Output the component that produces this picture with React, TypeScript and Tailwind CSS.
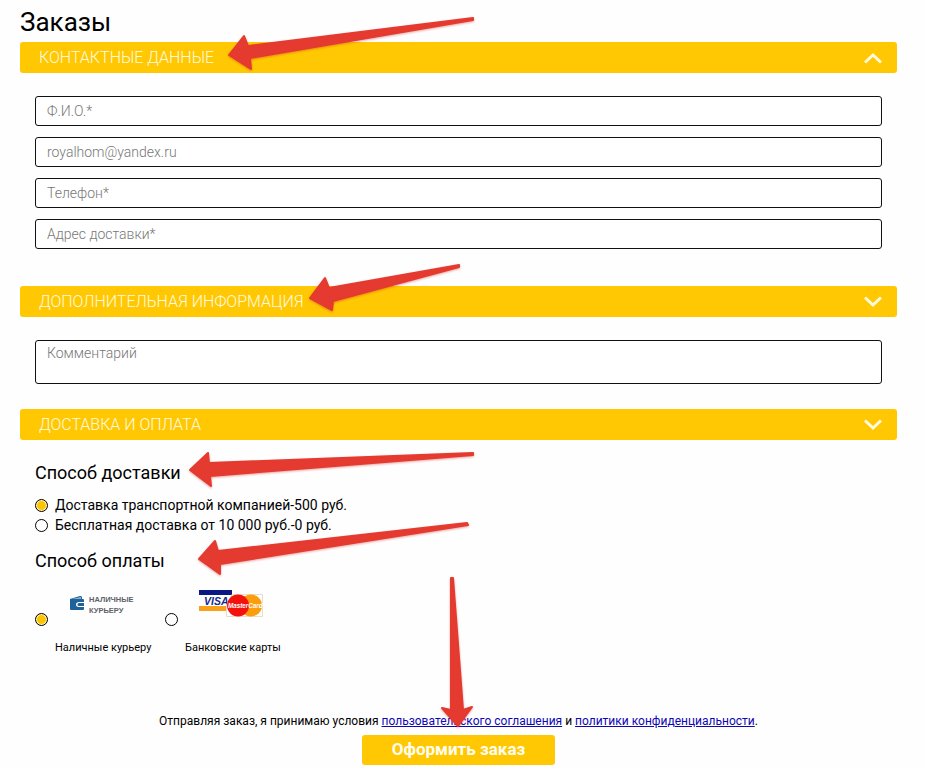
import React, { useState } from 'react';

type Field = {
  id: string;
  type: string;
  placeholder: string;
};

const fields: Field[] = [
  { id: 'name', type: 'text', placeholder: 'Ф.И.О.*' },
  { id: 'email', type: 'email', placeholder: 'royalhom@yandex.ru' },
  { id: 'phone', type: 'tel', placeholder: 'Телефон*' },
  { id: 'address', type: 'text', placeholder: 'Адрес доставки*' },
];

const deliveryOptions = [
  { id: 'transport', label: 'Доставка транспортной компанией-500 руб.' },
  { id: 'free', label: 'Бесплатная доставка от 10 000 руб.-0 руб.' },
];

const radioClass =
  'appearance-none shrink-0 w-[13px] h-[13px] rounded-full border border-black bg-white checked:bg-[#fdc500] checked:shadow-[inset_0_0_0_1px_#fff6cf]';

function Chevron({ up = false }: { up?: boolean }) {
  return (
    <svg className="w-5 h-3" viewBox="0 0 20 12" fill="none" stroke="#fffbe0" strokeWidth="3" aria-hidden="true">
      <path d={up ? 'M2 10.5 L10 3 L18 10.5' : 'M2 1.5 L10 9 L18 1.5'} />
    </svg>
  );
}

// Red pointer laid over the page, drawn from its outline
function Arrow({ points, className }: { points: string; className: string }) {
  return (
    <svg
      className={`absolute z-10 w-px h-px overflow-visible pointer-events-none drop-shadow-[0_1px_1px_rgba(200,40,30,0.4)] ${className}`}
      fill="#e53a30"
      stroke="#e53a30"
      strokeWidth="2"
      strokeLinejoin="round"
      aria-hidden="true"
    >
      <polygon points={points} />
    </svg>
  );
}

function SectionBar({ title, open, onToggle, children }: {
  title: string;
  open: boolean;
  onToggle: () => void;
  children?: React.ReactNode;
}) {
  return (
    <h2 className="relative">
      <button
        type="button"
        onClick={onToggle}
        aria-expanded={open}
        className="flex items-center justify-between w-full h-[31px] pl-[19px] pr-[14px] rounded-[3px] bg-[#ffc803] text-[#fffbe0] text-[16px] font-light"
      >
        <span>{title}</span>
        <Chevron up={open} />
      </button>
      {children}
    </h2>
  );
}

function CashLogo() {
  return (
    <svg className="w-[66px] h-[22px]" viewBox="0 0 66 22" aria-hidden="true">
      <path d="M1 5 L11 2 Q13 1.500 13 3.500 V5 H14 Q15 5 15 6 V8 H10 Q7 8 7 10.500 Q7 13 10 13 H15 V15 Q15 16 14 16 H2 Q1 16 1 15 Z" fill="#1f6299" />
      <path d="M10 9 H15 V12 H10 Q8.500 12 8.500 10.500 Q8.500 9 10 9 Z" fill="#1f6299" />
      <path d="M3 5 L12 3 V5 Z" fill="#8fb3d0" />
      <g fill="#5d6167" fontFamily="Liberation Sans, Arial, sans-serif" fontSize="7.500" fontWeight="700">
        <text x="20" y="8">НАЛИЧНЫЕ</text>
        <text x="20" y="18.500">КУРЬЕРУ</text>
      </g>
    </svg>
  );
}

function CardsLogo() {
  return (
    <svg className="w-[66px] h-[28px]" viewBox="0 0 66 28" aria-hidden="true">
      <rect x="0" y="0" width="33" height="21" fill="#fff" />
      <rect x="0" y="0" width="33" height="5" fill="#0b1884" />
      <rect x="0" y="16" width="33" height="5" fill="#f9a11b" />
      <text x="5" y="14.500" fill="#142a8c" fontFamily="Liberation Sans, Arial, sans-serif" fontSize="10.500" fontWeight="700" fontStyle="italic">VISA</text>
      <path d="M27.500 26.500 V15 L33 4.500 H63.500 V26.500 Z" fill="#fff" stroke="#e6ddcb" />
      <circle cx="52" cy="15.500" r="11" fill="#fb9d0c" />
      <circle cx="39" cy="15.500" r="11" fill="#f3120e" />
      <text x="29" y="18" fill="#fff" fontFamily="Liberation Sans, Arial, sans-serif" fontSize="6.300" fontWeight="700" fontStyle="italic">MasterCard</text>
    </svg>
  );
}

const paymentOptions = [
  { id: 'cash', label: 'Наличные курьеру', logo: <CashLogo />, logoClass: 'pt-[11px]' },
  { id: 'card', label: 'Банковские карты', logo: <CardsLogo />, logoClass: 'pt-[7px]' },
];

function App() {
  const [open, setOpen] = useState(true);
  const [infoOpen, setInfoOpen] = useState(false);
  const [deliveryOpen, setDeliveryOpen] = useState(false);
  const [delivery, setDelivery] = useState('transport');
  const [payment, setPayment] = useState('cash');

  return (
    <main className="relative pl-5 pr-[30px] pb-[3px] bg-[#fefefe] text-black font-[Roboto,sans-serif]">
      <h1 className="h-[42px] pt-[6px] text-[26px] leading-8">Заказы</h1>

      <form onSubmit={e => e.preventDefault()}>
        <SectionBar title="КОНТАКТНЫЕ ДАННЫЕ" open={open} onToggle={() => setOpen(!open)}>
          <Arrow className="left-0 top-0" points="209,13 224,-6 228,4 453,-24 453,-22 230,16 231,27" />
        </SectionBar>
        {open && (
          <div className="flex flex-col gap-[11px] px-[15px] pt-[23px] pb-[37px]">
            {fields.map(field => (
              <input
                key={field.id}
                id={field.id}
                type={field.type}
                aria-label={field.placeholder}
                placeholder={field.placeholder}
                className="w-full h-[30px] px-[11px] rounded-[3px] border border-[#111] bg-white text-[14px] font-light placeholder:text-[#777]"
              />
            ))}
          </div>
        )}

        <SectionBar title="ДОПОЛНИТЕЛЬНАЯ ИНФОРМАЦИЯ" open={infoOpen} onToggle={() => setInfoOpen(!infoOpen)}>
          <Arrow className="left-0 top-0" points="290,12 305,-8 309,2 439,-21 439,-19 313,15 312,24" />
        </SectionBar>
        <div className="flex px-[15px] pt-[23px] pb-[25px]">
          <textarea
            aria-label="Комментарий"
            placeholder="Комментарий"
            className="w-full h-[44px] px-[11px] py-[2px] resize-none rounded-[3px] border border-[#111] bg-white text-[14px] font-light leading-5 placeholder:text-[#777]"
          />
        </div>

        <SectionBar title="ДОСТАВКА И ОПЛАТА" open={deliveryOpen} onToggle={() => setDeliveryOpen(!deliveryOpen)} />
        <div className="px-[15px]">
          <fieldset className="relative pt-[19px]">
            <legend className="float-left w-full mb-2 text-[18px] leading-7">Способ доставки</legend>
            <Arrow className="left-0 top-0" points="155,30 173,13 174,23 438,13 438,15 175,36 176,46" />
            <div className="clear-both">
              {deliveryOptions.map(option => (
                <label key={option.id} className="flex items-center gap-[7px] h-5 text-[14px] leading-5">
                  <input
                    type="radio"
                    name="delivery"
                    className={radioClass}
                    checked={delivery === option.id}
                    onChange={() => setDelivery(option.id)}
                  />
                  {option.label}
                </label>
              ))}
            </div>
          </fieldset>

          <fieldset className="relative pt-3">
            <legend className="float-left w-full mb-2 text-[18px] leading-7">Способ оплаты</legend>
            <Arrow className="left-0 top-0" points="164,24 180,6 183,16 432,-12 433,-10 185,29 185,39" />
            <div className="clear-both flex">
              {paymentOptions.map(option => (
                <label key={option.id} className="flex items-center gap-[7px] w-[130px] text-[11px] leading-4">
                  <input
                    type="radio"
                    name="payment"
                    className={radioClass}
                    checked={payment === option.id}
                    onChange={() => setPayment(option.id)}
                  />
                  <span className="flex flex-col whitespace-nowrap">
                    <span className={`flex h-[57px] pl-[14px] ${option.logoClass}`}>{option.logo}</span>
                    {option.label}
                  </span>
                </label>
              ))}
            </div>
          </fieldset>
        </div>

        <div className="relative flex flex-col items-center pt-[55px]">
          <Arrow className="left-1/2 top-0" points="-1,70 -17,52 -8,54 -8,-78 -6,-78 4,54 13,51" />
          <p className="mb-1 text-[12px] leading-5">
            Отправляя заказ, я принимаю условия{' '}
            <a href="#agreement" className="text-[#0f06b5] underline">пользовательского соглашения</a> и{' '}
            <a href="#privacy" className="text-[#0f06b5] underline">политики конфиденциальности</a>.
          </p>
          <button type="submit" className="w-[193px] h-[30px] rounded-[3px] bg-[#ffc803] text-[17px] font-bold text-[#fffdf0]">
            Оформить заказ
          </button>
        </div>
      </form>
    </main>
  );
}

export default App;
